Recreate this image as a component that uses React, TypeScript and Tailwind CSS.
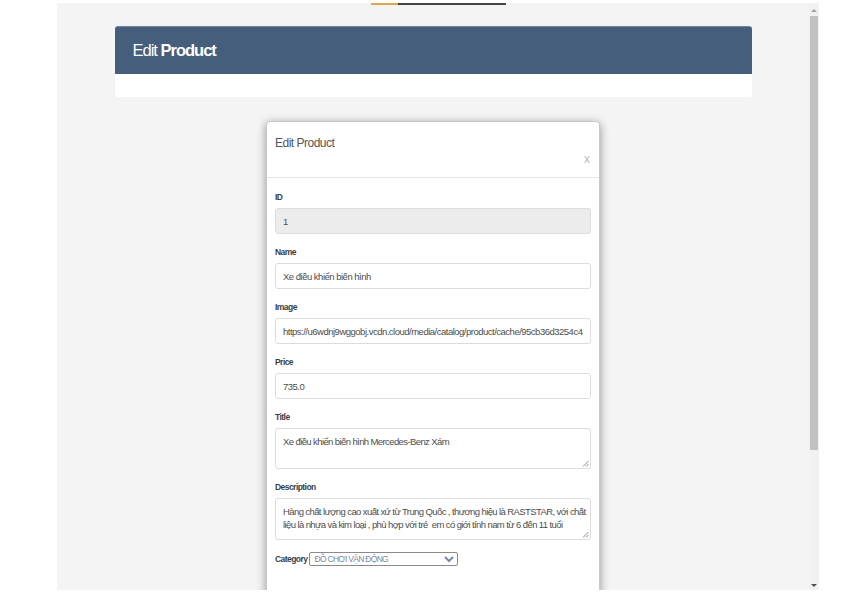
import React from "react";

const fieldFont = { fontFamily: '"Liberation Sans", Arial, sans-serif' };

interface FieldProps {
  label: string;
  value: string;
  disabled?: boolean;
}

const Field: React.FC<FieldProps> = ({ label, value, disabled }) => {
  return (
    <div className="mb-[12px]">
      <label className="mb-[5px] block text-[8.5px] leading-[12px] font-bold tracking-[-0.55px] text-[#3a3f48]">
        {label}
      </label>
      <input
        readOnly
        value={value}
        className={
          "block h-[26px] w-full rounded-[3px] border border-[#dcdcdc] px-[7px] text-[9.5px] tracking-[-0.5px] text-[#4d4d4d] outline-none " +
          (disabled ? "bg-[#ececec]" : "bg-white")
        }
        style={fieldFont}
      />
    </div>
  );
};

interface AreaProps {
  label: string;
  lines: string[];
  height: string;
}

// textarea look-alike, lines fixed so the wrap matches the screenshot
const Area: React.FC<AreaProps> = ({ label, lines, height }) => {
  return (
    <div className="mb-[12px]">
      <label className="mb-[5px] block text-[8.5px] leading-[12px] font-bold tracking-[-0.55px] text-[#3a3f48]">
        {label}
      </label>
      <div
        className={
          "relative w-full overflow-hidden rounded-[3px] border border-[#dcdcdc] bg-white py-[6px] pr-[2px] pl-[7px] text-[9.5px] leading-[13px] tracking-[-0.6px] text-[#4d4d4d] " +
          height
        }
      >
        {lines.map((line) => (
          <div key={line} className="whitespace-pre">
            {line}
          </div>
        ))}
        <svg className="absolute right-[1px] bottom-[1px]" width="7" height="7" viewBox="0 0 7 7">
          <path d="M6.5 1L1 6.5M6.5 4L4 6.5" stroke="#8a8a8a" strokeWidth="1" />
        </svg>
      </div>
    </div>
  );
};

export default function App() {
  return (
    <div className="min-h-screen bg-white" style={fieldFont}>
      <div className="ml-[57px] flex h-[590px] w-[762px] overflow-hidden pt-[3px]">
        <div className="flex h-[587px] w-full bg-[#f4f4f4]">
          {/* page */}
          <div className="flex-1">
            <div className="ml-[314px] flex h-[2px] w-[135px]">
              <div className="w-[27px] bg-[#e0a84a]" />
              <div className="flex-1 bg-[#444]" />
            </div>

            <div className="mx-auto mt-[21px] w-[637px] rounded-[3px] bg-white">
              <div className="flex h-[48px] items-center rounded-t-[3px] border-t border-[#6e859f] bg-[#445e7c] pl-[18px] text-[16.5px] tracking-[-1px] text-white">
                <span>Edit&nbsp;</span>
                <span className="font-bold">Product</span>
              </div>
              <div className="h-[23px]" />
            </div>

            <div className="mx-auto mt-[24px] w-[334px] rounded-[4px] border border-[#c8c8c8] bg-white shadow-[0_2px_10px_rgba(0,0,0,0.4)]">
              <div className="flex flex-col border-b border-[#e5e5e5] px-[8px] pt-[12px] pb-[11px]">
                <div className="text-[12px] leading-[18px] tracking-[-0.5px] text-[#555]">Edit Product</div>
                <div className="self-end pr-[1px] text-[12px] leading-[14px] text-[#bbb]">x</div>
              </div>

              <div className="px-[8px] pt-[13px] pb-[30px]">
                <Field label="ID" value="1" disabled />
                <Field label="Name" value="Xe điều khiển biến hình" />
                <Field
                  label="Image"
                  value="https://u6wdnj9wggobj.vcdn.cloud/media/catalog/product/cache/95cb36d3254c4a3b0a0c5e6f1e2b7d8a/x/e/xe-dieu-khien-bien-hinh.jpg"
                />
                <Field label="Price" value="735.0" />
                <Area label="Title" lines={["Xe điều khiển biến hình Mercedes-Benz Xám"]} height="h-[41px]" />
                <Area
                  label="Description"
                  lines={[
                    "Hàng chất lượng cao xuất xứ từ Trung Quốc , thương hiệu là RASTSTAR, với chất",
                    "liệu là nhựa và kim loại , phù hợp với trẻ  em có giới tính nam từ 6 đến 11 tuổi",
                  ]}
                  height="h-[42px]"
                />
                <div className="flex items-center">
                  <span className="mr-[2px] text-[8.5px] font-bold tracking-[-0.55px] text-[#3a3f48]">Category</span>
                  <select
                    className="h-[14px] w-[149px] rounded-[2px] border border-[#8a8a8a] bg-white text-[8.5px] leading-[12px] tracking-[-0.7px] text-[#7a8aa0]"
                    style={fieldFont}
                    defaultValue="1"
                  >
                    <option value="1">ĐỒ CHƠI VẬN ĐỘNG</option>
                  </select>
                </div>
              </div>
            </div>
          </div>

          {/* scrollbar */}
          <div className="flex w-[10px] flex-col items-center bg-[#f1f1f1]">
            <div className="mt-[6px] h-0 w-0 border-x-[3px] border-b-[3px] border-x-transparent border-b-[#a3a3a3]" />
            <div className="mt-[4px] h-[434px] w-[8px] bg-[#c1c1c1]" />
            <div className="flex-1" />
            <div className="mb-[3px] h-0 w-0 border-x-[3px] border-t-[3px] border-x-transparent border-t-[#505050]" />
          </div>
        </div>
      </div>
    </div>
  );
}
